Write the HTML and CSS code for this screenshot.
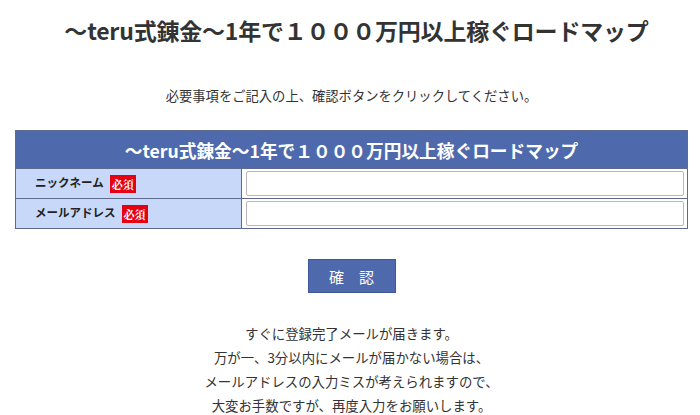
FILE: index.html
```html
<!DOCTYPE html>
<html lang="ja">
<head>
<meta charset="utf-8">
<link rel="stylesheet" href="styles.css">
</head>
<body>
<div class="page">
  <h1 class="title">～teru式錬金～1年で１０００万円以上稼ぐロードマップ</h1>
  <p class="lead">必要事項をご記入の上、確認ボタンをクリックしてください。</p>
  <table class="form">
    <tr><th colspan="2" class="form-head">～teru式錬金～1年で１０００万円以上稼ぐロードマップ</th></tr>
    <tr>
      <td class="label">ニックネーム<span class="req">必須</span></td>
      <td class="field"><input class="input" type="text"></td>
    </tr>
    <tr>
      <td class="label">メールアドレス<span class="req">必須</span></td>
      <td class="field"><input class="input" type="text"></td>
    </tr>
  </table>
  <div class="actions"><button class="btn">確　認</button></div>
  <p class="note">すぐに登録完了メールが届きます。<br>万が一、3分以内にメールが届かない場合は、<br>メールアドレスの入力ミスが考えられますので、<br>大変お手数ですが、再度入力をお願いします。</p>
</div>
</body>
</html>
```
FILE: styles.css
```css
* { box-sizing: border-box; }
html, body { margin: 0; padding: 0; background: #fff; }
body {
  font-family: "Noto Sans CJK JP", "Noto Sans", sans-serif;
  color: #333;
}
.page { width: 700px; padding: 0 12px 0 15px; }
.title {
  margin: 0 0 0 10px;
  padding-top: 13px;
  height: 48px;
  font-size: 23px;
  line-height: 34px;
  font-weight: bold;
  text-align: center;
  color: #333;
  letter-spacing: -0.2px;
}
.lead {
  margin: 38px 0 0;
  font-size: 13.3px;
  line-height: 20px;
  text-align: center;
}
.form {
  margin-top: 24px;
  width: 673px;
  border-collapse: collapse;
  border: 1px solid #5f6b8c;
}
.form-head {
  background: #4f6aac;
  color: #fff;
  font-size: 17.7px;
  font-weight: bold;
  height: 38px;
  padding: 0;
  text-align: center;
  border: 1px solid #5f6b8c;
}
.label {
  width: 226px;
  height: 30px;
  background: #c7d8f8;
  border: 1px solid #5f6b8c;
  padding: 0 0 0 19px;
  font-size: 11.5px;
  font-weight: bold;
  color: #222;
}
.req {
  display: inline-block;
  margin-left: 6px;
  background: #e50012;
  color: #fff;
  font-family: "Noto Serif CJK JP", "Liberation Serif", serif;
  font-size: 11px;
  font-weight: bold;
  line-height: 18px;
  padding: 0 2px;
  vertical-align: middle;
}
.field {
  border: 1px solid #5f6b8c;
  padding: 2px 3px 2px 4px;
}
.input {
  display: block;
  width: 100%;
  height: 25px;
  border: 1px solid #b8b8b8;
  border-radius: 2px;
  background: #fff;
}
.actions { text-align: center; margin-top: 30px; }
.btn {
  width: 88px;
  height: 34px;
  border: 1px solid #3d579a;
  background: #4e6aad;
  color: #fff;
  font-family: "Noto Sans CJK JP", sans-serif;
  font-size: 15px;
  padding: 0;
}
.note {
  margin: 28px 0 0;
  font-size: 13.4px;
  line-height: 24px;
  text-align: center;
}
```
